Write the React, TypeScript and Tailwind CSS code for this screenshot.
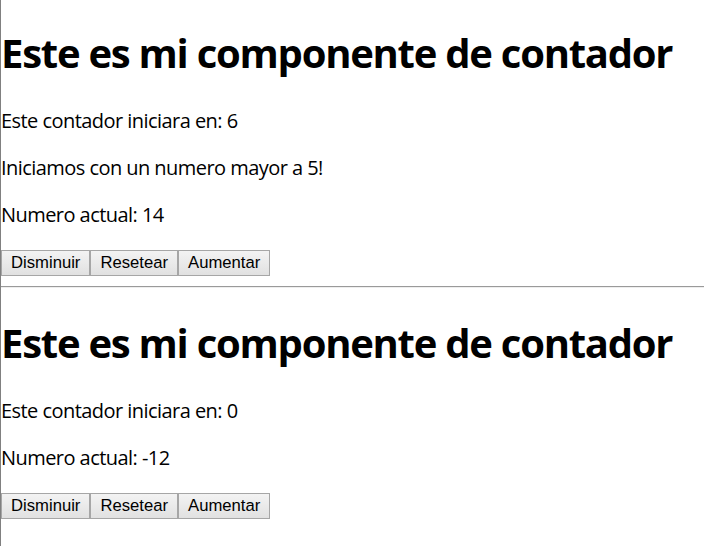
import React from "react";

function Btn({ children }: { children: React.ReactNode }) {
  return (
    <button className="h-[26px] px-[9px] border border-[#a6a6a6] bg-gradient-to-b from-[#f3f3f3] to-[#e1e1e1] text-[16.67px] leading-none text-black font-['Liberation_Sans',Arial,sans-serif]">
      {children}
    </button>
  );
}

function Contador({ inicio, actual, mayor, first }: { inicio: number; actual: number; mayor?: boolean; first?: boolean }) {
  return (
    <div>
      <h1
        className={
          first
            ? "text-[40px] font-bold leading-[53px] pt-[26px] text-black font-['Open_Sans',sans-serif] tracking-[-1.25px]"
            : "text-[40px] font-bold leading-[53px] pt-[28px] text-black font-['Open_Sans',sans-serif] tracking-[-1.25px]"
        }
      >
        Este es mi componente de contador
      </h1>
      <p className="mt-[28px] text-[20px] leading-[27px] text-black tracking-[-0.55px]">Este contador iniciara en: {inicio}</p>
      {mayor && <p className="mt-[20px] text-[20px] leading-[27px] text-black tracking-[-0.55px]">Iniciamos con un numero mayor a 5!</p>}
      <p className="mt-[20px] text-[20px] leading-[27px] text-black tracking-[-0.55px]">Numero actual: {actual}</p>
      <div className="flex mt-[22px]">
        <Btn>Disminuir</Btn>
        <Btn>Resetear</Btn>
        <Btn>Aumentar</Btn>
      </div>
    </div>
  );
}

export default function App() {
  return (
    <div className="min-h-[546px] border-l border-[#808080] bg-white font-['Open_Sans',sans-serif]">
      <Contador inicio={6} actual={14} mayor first />
      <div className="mt-[10px] border-t border-t-[#9a9a9a] border-b border-b-[#eeeeee]" />
      <Contador inicio={0} actual={-12} />
    </div>
  );
}
